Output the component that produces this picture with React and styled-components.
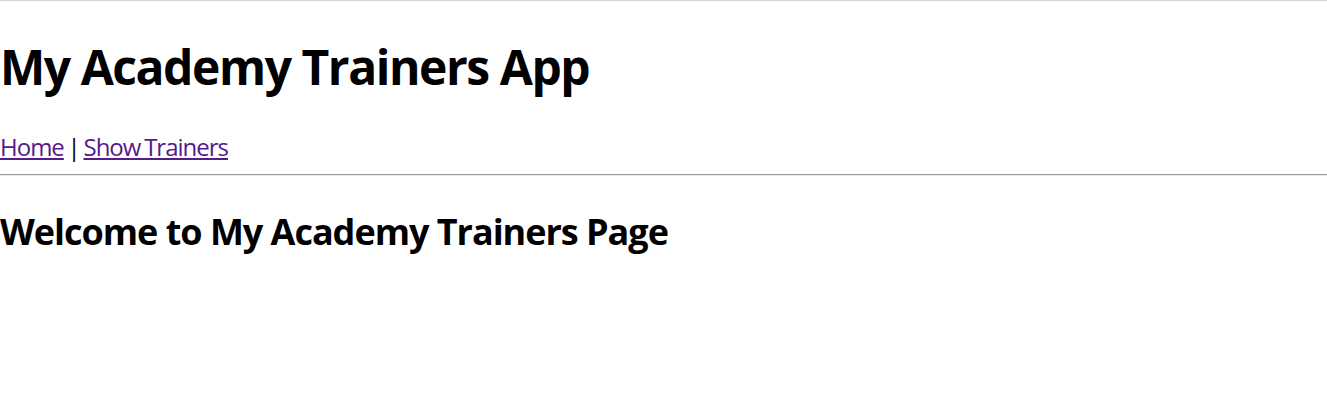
import styled, { createGlobalStyle } from "styled-components";

const GlobalStyle = createGlobalStyle`
  body {
    margin: 0;
    background: #fff;
    color: #000;
    font-family: "Open Sans", "Noto Sans", sans-serif;
  }
`;

const Page = styled.div`
  border-top: 1px solid #d3d3d3;
`;

const Title = styled.h1`
  margin: 34px 0 32px;
  font-size: 48px;
  line-height: 64px;
  font-weight: 700;
  letter-spacing: -1.45px;
`;

const Nav = styled.nav`
  font-size: 24px;
  line-height: 31px;
  letter-spacing: -1px;
  word-spacing: -1.5px;
`;

const NavLink = styled.a`
  color: #551a8b;
  text-decoration: underline;
`;

const Divider = styled.hr`
  margin: 12px 0 0;
  border: none;
  border-top: 1px solid #9a9a9a;
  border-bottom: 1px solid #ececec;
`;

const Heading = styled.h2`
  margin: 32px 0 0;
  font-size: 36px;
  line-height: 48px;
  font-weight: 700;
  letter-spacing: -1.02px;
`;

export default function App() {
  return (
    <Page>
      <GlobalStyle />
      <Title>My Academy Trainers App</Title>
      <Nav>
        <NavLink href="#">Home</NavLink> | <NavLink href="#">Show Trainers</NavLink>
      </Nav>
      <Divider />
      <Heading>Welcome to My Academy Trainers Page</Heading>
    </Page>
  );
}
